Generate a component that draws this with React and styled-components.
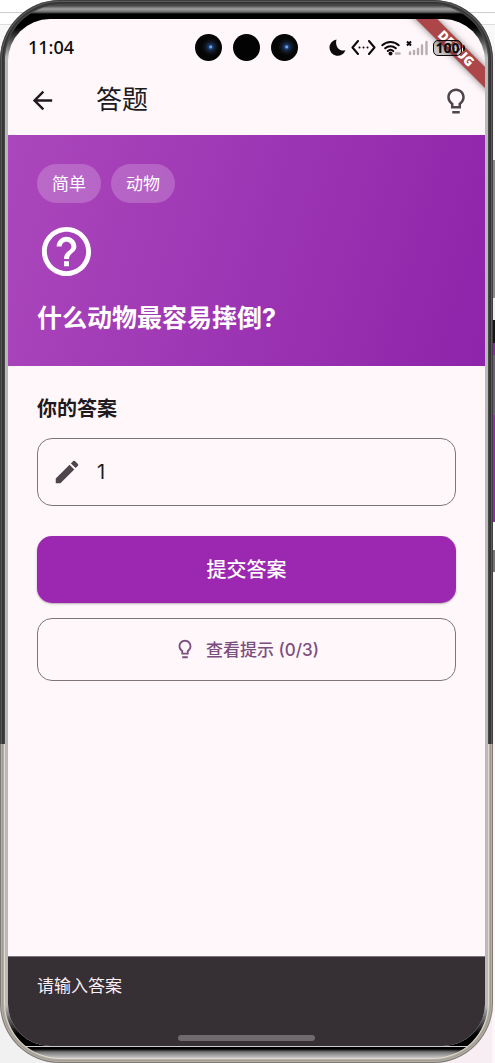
import React, { useState } from "react";
import styled, { createGlobalStyle } from "styled-components";
import { MdArrowBack, MdHelpOutline } from "react-icons/md";

const GlobalStyle = createGlobalStyle`
  *, *::before, *::after { box-sizing: border-box; }
  body {
    margin: 0;
    font-family: Inter, "Noto Sans CJK SC", sans-serif;
    color: #201a1e;
  }
  button, input { font: inherit; }
`;

const Desktop = styled.div`
  display: flex;
  min-height: 100vh;
  padding-right: 2px;
  background:
    linear-gradient(transparent 100px, #f8f8f8 100px 160px, #8a8a8a 160px 298px, #eee 298px 320px,
      #151515 320px 343px, #8e24aa 343px 355px, #6c6078 355px 415px, #9c27b0 415px 522px,
      #fff 522px 550px, #777 550px 572px, #fff6fa 572px) right top / 3px 100% no-repeat,
    linear-gradient(90deg, #f1f1f1 50%, #f7edf3 50%) bottom / 100% 80px no-repeat,
    linear-gradient(#fff 12px, #ccc 12px 13px, #fff 13px 24px, #ddd 24px 25px, #f8f8f8 25px);
`;

const Frame = styled.div`
  flex: 1;
  display: flex;
  min-width: 0;
  padding: 5px;
  border-radius: 60px;
  background: linear-gradient(#484848 70%, #e2dacd 70%);
  box-shadow:
    inset 0 0 0 1px rgba(0, 0, 0, 0.3),
    inset 0 0 0 2px rgba(255, 255, 255, 0.2),
    inset 0 0 0 3px rgba(0, 0, 0, 0.1),
    inset 0 0 0 4px rgba(0, 0, 0, 0.2);
`;

const Bezel = styled.div`
  flex: 1;
  display: flex;
  min-width: 0;
  padding: 14px 3px 12px;
  border-radius: 55px;
  background: linear-gradient(
    #3a3a3a 0, #a0a0a0 4px, #6a6a6a 7px, #000 9px, #000 22px, #b8bab9 52px,
    #b8bab9 calc(100% - 52px), #000 calc(100% - 24px), #000 calc(100% - 12px),
    #d0ccce calc(100% - 12px) calc(100% - 11px), #000 calc(100% - 11px) calc(100% - 9px),
    #777 calc(100% - 6px), #c8c8c8 100%
  );
`;

const Screen = styled.div`
  position: relative;
  flex: 1;
  display: flex;
  flex-direction: column;
  min-width: 0;
  overflow: hidden;
  border-radius: 42px;
  background: #fff7fa;
`;

const StatusBar = styled.div`
  position: relative;
  z-index: 2;
  display: grid;
  grid-template-columns: 1fr auto 1fr;
  align-items: center;
  height: 47px;
  padding: 10px 20px 0;
  color: #0c0a0b;
`;

const Clock = styled.time`
  padding-bottom: 2px;
  font-family: "Noto Sans", sans-serif;
  font-size: 18px;
  line-height: 24px;
  font-weight: 500;
`;

const Cameras = styled.div`
  display: flex;
  gap: 11px;
`;

const Lens = styled.span`
  width: 27px;
  height: 27px;
  border-radius: 50%;
  background: ${({ $glass }) =>
    $glass
      ? "radial-gradient(circle at 58% 48%, #6fa4e0 0 1px, #1b3f78 2px, #14233c 4px, #0f1218 6px, #050505 9px)"
      : "#030303"};
`;

const StatusIcons = styled.div`
  display: flex;
  align-items: center;
  justify-content: flex-end;
  gap: 5px;

  svg { display: block; flex: none; }
`;

const Battery = styled.span`
  position: relative;
  width: 29px;
  height: 16px;
  margin-right: 3px;
  border: 1px solid #0c0a0b;
  border-radius: 5px;
  background: rgba(0, 0, 0, 0.2);
  font: 700 14px/14px "Noto Sans", sans-serif;
  display: flex;
  justify-content: center;

  &::after {
    content: "";
    position: absolute;
    right: -4px;
    top: 4px;
    width: 2px;
    height: 6px;
    border-radius: 0 2px 2px 0;
    background: #0c0a0b;
  }
`;

const DebugRibbon = styled.div`
  position: absolute;
  z-index: 1;
  top: 22px;
  right: -41px;
  width: 140px;
  height: 15px;
  background: #ac4648;
  box-shadow: 0 0 7px rgba(0, 0, 0, 0.5);
  color: #fff;
  font: 900 13px/15px "Noto Sans", sans-serif;
  text-align: center;
  transform: rotate(45deg);
`;

const AppBar = styled.header`
  display: flex;
  align-items: center;
  height: 69px;
  padding: 0 14px 0 20px;
`;

const IconButton = styled.button`
  display: flex;
  padding: 0;
  border: 0;
  background: none;
  color: ${({ $tone }) => $tone};
  cursor: pointer;
`;

const PageTitle = styled.h1`
  flex: 1;
  margin: 0 0 0 39px;
  padding-bottom: 2px;
  font-size: 26px;
  line-height: 36px;
  font-weight: 400;
`;

const Hero = styled.section`
  display: flex;
  flex-direction: column;
  gap: 19px;
  padding: 29px;
  background: linear-gradient(106deg, #ab47bc, #8e24aa);
  color: #fff;
`;

const Chips = styled.div`
  display: flex;
  gap: 10px;
`;

const Chip = styled.span`
  padding: 1px 15px 0;
  border-radius: 20px;
  background: rgba(255, 255, 255, 0.2);
  font-size: 17px;
  line-height: 38px;
`;

const Question = styled.h2`
  margin: 0;
  font-size: 25px;
  line-height: 37px;
  font-weight: 700;
`;

const AnswerForm = styled.form`
  display: flex;
  flex-direction: column;
  gap: 15px;
  flex: 1;
  padding: 30px 29px;
`;

const AnswerLabel = styled.label`
  font-size: 20px;
  line-height: 27px;
  font-weight: 700;
`;

const Field = styled.div`
  display: flex;
  align-items: center;
  gap: 15px;
  height: 68px;
  margin-bottom: 15px;
  padding: 0 14px;
  border: 1px solid #81737c;
  border-radius: 15px;
  color: #4e444b;
`;

const FieldInput = styled.input`
  flex: 1;
  min-width: 0;
  padding: 0;
  border: 0;
  outline: 0;
  background: none;
  color: #201a1e;
  font-size: 20px;
  line-height: 30px;
`;

const ActionButton = styled.button`
  display: flex;
  align-items: center;
  justify-content: center;
  gap: 10px;
  padding: 0 0 2px;
  border-radius: 15px;
  font-weight: 500;
  cursor: pointer;
`;

const SubmitButton = styled(ActionButton)`
  height: 67px;
  border: 0;
  background: #9c27b0;
  box-shadow: 0 1px 2px rgba(0, 0, 0, 0.3);
  color: #fff;
  font-size: 20px;
`;

const HintButton = styled(ActionButton)`
  height: 63px;
  border: 1px solid #81737c;
  background: none;
  color: #7b4e7f;
  font-size: 17px;
`;

const Snackbar = styled.div`
  display: flex;
  flex-direction: column;
  justify-content: space-between;
  height: 90px;
  padding: 15px 29px 5px;
  border-top: 1px solid #7d757a;
  background: #362f33;
  color: #fbeef5;
  font-size: 17px;
  line-height: 28px;
`;

const HomeIndicator = styled.div`
  align-self: center;
  width: 137px;
  height: 6px;
  border-radius: 3px;
  background: #70696e;
`;

const Bulb = ({ size }) => (
  <svg width={size} height={size} viewBox="0 0 24 24" fill="currentColor" aria-hidden="true">
    <path d="M9 20h6v2H9zM12 2C8.14 2 5 5.14 5 9c0 2.38 1.19 4.47 3 5.74V18h8v-3.26c1.81-1.27 3-3.36 3-5.74 0-3.86-3.14-7-7-7zm2.85 11.1l-.85.6V16h-4v-2.3l-.85-.6A5 5 0 0 1 7 9c0-2.76 2.24-5 5-5s5 2.24 5 5a5 5 0 0 1-2.15 4.1z" />
  </svg>
);

const Pencil = () => (
  <svg width="30" height="30" viewBox="0 0 24 24" fill="currentColor" aria-hidden="true">
    <path d="M3 17.250V21h3.750L17.810 9.940l-3.750-3.750L3 17.250zM20.710 7.040a1 1 0 0 0 0-1.410l-2.340-2.340a1 1 0 0 0-1.410 0l-1.830 1.830 3.750 3.750 1.830-1.830z" />
  </svg>
);

const Moon = () => (
  <svg width="17" height="17" viewBox="0 0 17 17" aria-hidden="true">
    <path d="M7.500.5A8.200 8.200 0 1 0 16.500 11C11.500 13.500 5.500 8 7.500.5z" fill="#0c0a0b" />
  </svg>
);

const Link = () => (
  <svg width="25" height="15" viewBox="0 0 25 15" fill="none" stroke="#0c0a0b" strokeWidth="2" strokeLinecap="round" strokeLinejoin="round" aria-hidden="true">
    <path d="M7 1L1.500 7.500 7 14M18 1l5.500 6.500L18 14" />
    <path d="M8.500 7.500h.01M12.500 7.500h.01M16.500 7.500h.01" />
  </svg>
);

const Wifi = () => (
  <svg width="20" height="16" viewBox="0 0 20 16" fill="none" stroke="#0c0a0b" strokeWidth="2" strokeLinecap="round" aria-hidden="true">
    <path d="M1.300 5.200a12 12 0 0 1 16.400 0M4.200 8.300a7.800 7.800 0 0 1 10.600 0M6.800 11a4 4 0 0 1 5.400 0" />
    <circle cx="9.500" cy="13.500" r="2" fill="#0c0a0b" stroke="none" />
    <path d="M15 13.500h3.500" stroke="#b9b0b5" strokeWidth="2.500" />
  </svg>
);

const Signal = () => (
  <svg width="22" height="16" viewBox="0 0 22 16" fill="none" aria-hidden="true">
    <path d="M1 1.500l4 4M5 1.500l-4 4" stroke="#0c0a0b" strokeWidth="2" />
    <path d="M4 12.500V14M8 11v3M12 9v5M16 5.500V14M20.500 2v12" stroke="#b6afb2" strokeWidth="2.400" strokeLinecap="round" />
  </svg>
);

export default function App() {
  const [answer, setAnswer] = useState("1");

  return (
    <>
      <GlobalStyle />
      <Desktop>
        <Frame>
          <Bezel>
            <Screen>
              <DebugRibbon>DEBUG</DebugRibbon>
              <StatusBar>
                <Clock>11:04</Clock>
                <Cameras>
                  <Lens $glass />
                  <Lens />
                  <Lens $glass />
                </Cameras>
                <StatusIcons>
                  <Moon />
                  <Link />
                  <Wifi />
                  <Signal />
                  <Battery>100</Battery>
                </StatusIcons>
              </StatusBar>
              <AppBar>
                <IconButton type="button" aria-label="返回" $tone="#201a1e">
                  <MdArrowBack size={29} />
                </IconButton>
                <PageTitle>答题</PageTitle>
                <IconButton type="button" aria-label="提示" $tone="#4e444b">
                  <Bulb size={30} />
                </IconButton>
              </AppBar>
              <Hero>
                <Chips>
                  <Chip>简单</Chip>
                  <Chip>动物</Chip>
                </Chips>
                <MdHelpOutline size={59} />
                <Question>什么动物最容易摔倒?</Question>
              </Hero>
              <AnswerForm onSubmit={(event) => event.preventDefault()}>
                <AnswerLabel htmlFor="answer">你的答案</AnswerLabel>
                <Field>
                  <Pencil />
                  <FieldInput
                    id="answer"
                    type="text"
                    value={answer}
                    onChange={(event) => setAnswer(event.target.value)}
                  />
                </Field>
                <SubmitButton type="submit">提交答案</SubmitButton>
                <HintButton type="button">
                  <Bulb size={22} />
                  查看提示 (0/3)
                </HintButton>
              </AnswerForm>
              <Snackbar role="status">
                请输入答案
                <HomeIndicator />
              </Snackbar>
            </Screen>
          </Bezel>
        </Frame>
      </Desktop>
    </>
  );
}
